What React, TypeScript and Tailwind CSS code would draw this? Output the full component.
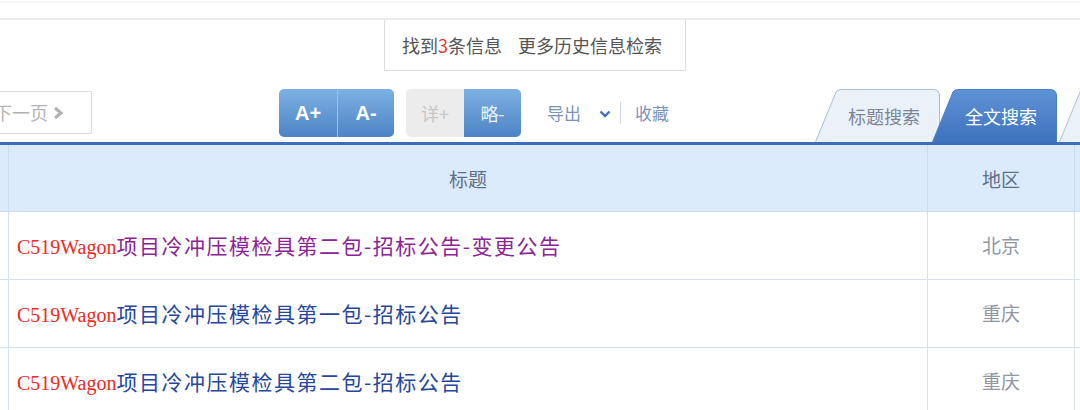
import React from 'react'

const cjk = "font-['Noto_Sans_CJK_SC','Noto_Sans',sans-serif]"

const rows = [
  { title: '项目冷冲压模检具第二包-招标公告-变更公告', area: '北京', visited: true },
  { title: '项目冷冲压模检具第一包-招标公告', area: '重庆', visited: false },
  { title: '项目冷冲压模检具第二包-招标公告', area: '重庆', visited: false },
]

// slanted tab drawn as svg behind its label
const Tab = ({ label, active, className }: { label: string; active?: boolean; className?: string }) => (
  <div className={`relative h-[53px] w-[126px] shrink-0 ${className ?? ''}`}>
    <svg className="absolute inset-0" width="126" height="53" viewBox="0 0 126 53">
      <defs>
        <linearGradient id="tabBlue" x1="0" y1="0" x2="0" y2="1">
          <stop offset="0" stopColor="#5f93d6" />
          <stop offset="1" stopColor="#3d72bd" />
        </linearGradient>
      </defs>
      <path
        d="M0.5,53 L21,3 Q22.5,0.5 26,0.5 L118,0.5 Q124.5,0.5 124.5,7 L124.5,53"
        fill={active ? 'url(#tabBlue)' : '#ebf1f9'}
        stroke={active ? '#4a7ec4' : '#a9bfdc'}
        strokeWidth="1"
      />
    </svg>
    <span
      className={`relative flex h-full items-center justify-center pl-[12px] pt-[2px] text-[18px] ${cjk} ${
        active ? 'text-white' : 'text-[#7b8699]'
      }`}
    >
      {label}
    </span>
  </div>
)

export default function App() {
  return (
    <div className={`h-[410px] w-[1080px] overflow-hidden bg-white ${cjk}`}>
      {/* faint top strip */}
      <div className="mt-[1px] h-[17px] border-t-2 border-[#f6f6f6]" />

      {/* result count */}
      <div className="border-t-2 border-[#ebebeb]">
        <div className="ml-[384px] flex h-[51px] w-[302px] items-center border-x border-b border-[#dedede] pl-[17px] text-[18px] text-[#555]">
          <span>
            找到<span className="text-[#e8362e]">3</span>条信息
          </span>
          <span className="ml-[16px]">更多历史信息检索</span>
        </div>
      </div>

      {/* toolbar + tabs */}
      <div className="mt-[18px] flex h-[53px] items-start">
        <div className="-ml-[7px] mt-[2px] flex h-[43px] w-[99px] shrink-0 items-center border border-[#dcdcdc] text-[18px] text-[#b3b3b3]">
          下一页
          <svg width="12" height="14" viewBox="0 0 12 14" className="ml-[4px]">
            <path d="M3 2 L9 7 L3 12" fill="none" stroke="#b0b0b0" strokeWidth="3" />
          </svg>
        </div>

        <div className="ml-[187px] flex h-[48px] w-[115px] shrink-0 overflow-hidden rounded-[5px] bg-gradient-to-b from-[#7eb0e2] to-[#4c84c5] font-['Liberation_Sans',sans-serif] text-[20px] font-bold text-white">
          <div className="flex w-[59px] items-center justify-center border-r border-[#9cc0e6]">A+</div>
          <div className="flex flex-1 items-center justify-center">A-</div>
        </div>

        <div className="ml-[12px] flex h-[48px] w-[115px] shrink-0 overflow-hidden rounded-[5px] text-[18px]">
          <div className="flex w-[58px] items-center justify-center bg-[#ececec] text-[#c6c6c6]">详+</div>
          <div className="flex flex-1 items-center justify-center bg-gradient-to-b from-[#7eb0e2] to-[#4c84c5] text-[#e9f2fb]">
            略-
          </div>
        </div>

        <div className="ml-[26px] flex h-[48px] w-[268px] shrink-0 items-center text-[17px] text-[#7d94ba]">
          导出
          <svg width="12" height="8" viewBox="0 0 12 8" className="ml-[18px] mt-[2px]">
            <path d="M1.5 1.5 L6 6 L10.5 1.5" fill="none" stroke="#3f72b9" strokeWidth="2.4" />
          </svg>
          <div className="ml-[9px] h-[22px] w-px bg-[#d2d8e2]" />
          <span className="ml-[14px]">收藏</span>
        </div>

        <div className="flex shrink-0">
          <Tab label="标题搜索" />
          <Tab label="全文搜索" active className="-ml-[9px]" />
          <Tab label="" className="ml-[1px]" />
        </div>
      </div>

      {/* table */}
      <div className="border-t-[3px] border-[#3c6fb7]">
        <div className="grid grid-cols-[8px_919px_147px_40px] bg-[#dcebfb] text-[19px] text-[#5c708b]">
          <div className="h-[67px] border-b border-[#cadcf0]" />
          <div className="flex h-[67px] items-center justify-center border-b border-l border-[#cadcf0] pt-[2px]">标题</div>
          <div className="flex h-[67px] items-center justify-center border-b border-l border-[#cadcf0] pt-[2px]">地区</div>
          <div className="h-[67px] border-b border-l border-[#cadcf0]" />
        </div>
        {rows.map((r, i) => (
          <div key={i} className="grid grid-cols-[8px_919px_147px_40px]">
            <div className="h-[68px] border-b border-[#d3e2f2]" />
            <div className="flex h-[68px] items-center border-b border-l border-[#d3e2f2] pl-[8px]">
              <p className="leading-none">
                <span className="font-['Liberation_Serif',serif] text-[20px] text-[#ee2a22]">C519Wagon</span>
                <span className={`text-[21px] tracking-[1.5px] ${r.visited ? 'text-[#8c2496]' : 'text-[#25479c]'}`}>{r.title}</span>
              </p>
            </div>
            <div className="flex h-[68px] items-center justify-center border-b border-l border-[#d3e2f2] text-[19px] text-[#8f97a6]">
              {r.area}
            </div>
            <div className="h-[68px] border-b border-l border-[#d3e2f2]" />
          </div>
        ))}
      </div>
    </div>
  )
}
